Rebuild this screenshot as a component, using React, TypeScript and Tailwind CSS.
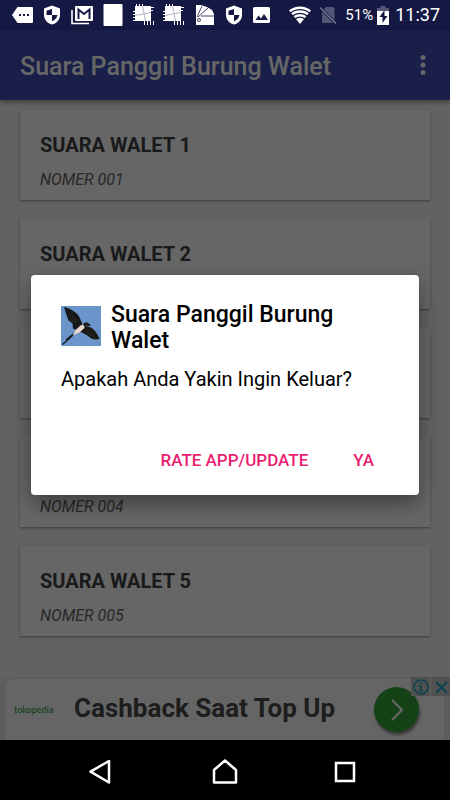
import React from "react";

const tracks = [1, 2, 3, 4, 5];

function ShieldIcon() {
  return (
    <svg className="h-5 w-[18px]" viewBox="0 0 18 20">
      <path d="M9 0.5 1 3.5V10c0 4.600 3.400 8.300 8 9.500 4.600-1.200 8-4.900 8-9.500V3.500Z" fill="#fff" />
      <path d="M9 4v6H3.500V5.800ZM9 10h5.500c-.5 3-2.500 5.200-5.500 6.300Z" fill="#151843" />
    </svg>
  );
}

function PatchIcon() {
  return (
    <svg className="h-[22px] w-[22px]" viewBox="0 0 22 22">
      <path d="M2 2h16v15H2Z" fill="#fff" />
      <path d="M0 7.500h2M0 10.500h2M0 13.500h2M0 16.500h2M3.500 0v2M6.500 0v2M9.500 0v2M11.500 17v4M14.500 17v4M17.500 17v4M20.500 17v4M18 3.500h3M18 6.500h2" stroke="#fff" strokeWidth="1" />
      <path d="m9.500 2 3 15M2 11.500 18 8.500" stroke="#a3a5bd" strokeWidth=".8" fill="none" />
    </svg>
  );
}

function StatusBar() {
  return (
    <header className="flex h-[30px] shrink-0 items-center bg-[#151843] pr-2.5 pl-3 text-white">
      <div className="flex flex-1 items-center gap-2.5">
        <svg className="h-4 w-[21px]" viewBox="0 0 21 16">
          <path d="M5.500 0H20q1 0 1 1v14q0 1-1 1H5.500L0 8Z" fill="#fff" />
          <path d="M7 7h2v2H7Zm4 0h2v2h-2Zm4 0h2v2h-2Z" fill="#151843" />
        </svg>
        <ShieldIcon />
        <svg className="h-[19px] w-[22px]" viewBox="0 0 22 19">
          <path d="M1 4v13.500h17" fill="none" stroke="#fff" strokeWidth="1.600" />
          <rect x="4" y="0" width="18" height="15" rx="1" fill="#fff" />
          <path d="M7.500 13V3.500L13 8l5.500-4.500V13" fill="none" stroke="#151843" strokeWidth="2" />
        </svg>
        <svg className="h-[22px] w-5" viewBox="0 0 20 22">
          <rect x=".5" width="19" height="22" rx="1" fill="#fff" />
        </svg>
        <div className="flex gap-2">
          <PatchIcon />
          <PatchIcon />
        </div>
        <svg className="h-5 w-5" viewBox="0 0 20 20">
          <path d="M1 0h5l6 2 5 3 2 4v11H1Z" fill="#fff" />
          <path d="M2 12 7 1M3 12 13 3M6 11h13" stroke="#151843" strokeWidth=".8" />
          <circle cx="4" cy="15" r="1.500" fill="none" stroke="#151843" strokeWidth=".8" />
        </svg>
        <ShieldIcon />
        <svg className="h-4 w-[17px]" viewBox="0 0 17 16">
          <rect width="17" height="16" rx="1.500" fill="#fff" />
          <path d="m2.500 13 3-4.500 2.500 3 3-4.500 4 6Z" fill="#151843" />
        </svg>
      </div>
      <div className="flex items-center gap-1">
        <svg className="h-[18px] w-[22px]" viewBox="0 0 22 18">
          <path d="M0 4.500C6-.8 16-.8 22 4.500L11 18Z" fill="#fff" />
          <path d="M1.500 7c5.500-4.500 13.500-4.500 19 0M3.500 10c4.500-3.500 10.500-3.500 15 0M6 13c3-2.200 7-2.200 10 0" fill="none" stroke="#151843" strokeWidth="1.200" />
        </svg>
        <svg className="ml-1 h-[18px] w-[18px]" viewBox="0 0 18 18">
          <path d="M7 1h7q1.500 0 1.500 1.500V17H3V5Z" fill="#545675" />
          <path d="m1 1.500 16 16" stroke="#151843" strokeWidth="3" />
          <path d="m1 1.500 16 16" stroke="#77799a" strokeWidth="1.400" />
        </svg>
        <span className="ml-1 text-[15px] leading-5">51%</span>
        <svg className="h-[19px] w-3" viewBox="0 0 12 19">
          <path d="M3.500 0h5v2H12v5H0V2h3.500Z" fill="#545675" />
          <path d="M0 5h12v14H0Z" fill="#fff" />
          <path d="M7.500 4 2.500 11h3v6l5-7h-3Z" fill="#151843" />
        </svg>
        <time className="ml-0.5 text-lg leading-6">11:37</time>
      </div>
    </header>
  );
}

function SwallowPicture() {
  return (
    <svg className="mt-1 h-10 w-10 shrink-0" viewBox="0 0 40 40" role="img" aria-label="Walet">
      <rect width="40" height="40" fill="#6b94cb" />
      <path d="M3 1c4 1 7 2 10 4.500 3 2 5 4 6 7l2.500 6-5 6-4.500-2-.5-5-4-3L5.500 9Z" fill="#15171a" />
      <path d="m22 20.500 7 .5c4 2 8 7 9.500 12-3 .8-6 .5-8-.5l-5-3.500-7.500-4Z" fill="#1b1914" />
      <path d="m8 7 8 9M24 24l10 7M10 13l4 4" stroke="#38362f" strokeWidth=".6" />
      <path d="m15 25-4 5L1.500 38.500M14 26.500 5 34" fill="none" stroke="#12161d" strokeWidth="1.200" />
      <path d="m19.500 19.500 4-1.500v4l-5 4.500-7 3 3-5.500Z" fill="#e6d6cc" />
      <path d="M22 18.500c1-3 5-2.500 6.500-.5l1.500 1-2 1-4 1.500Z" fill="#171923" />
      <circle cx="25.500" cy="19.500" r=".7" fill="#8a4a35" />
    </svg>
  );
}

function AdBanner() {
  return (
    <aside className="relative h-[63px] shrink-0 bg-[#e9e9e9] px-1.5 pt-0.5">
      <div className="flex h-full items-center rounded-tl-lg bg-[#fcfcfc] pr-[25px] pl-2">
        <span className="w-[60px] font-['Lato',sans-serif] text-[9px] text-[#149b36]">tokopedia</span>
        <a href="#ad" className="flex-1 pb-1 text-[26px] leading-8 font-bold whitespace-nowrap text-[#4a4a4a]">
          Cashback Saat Top Up
        </a>
        <button aria-label="Buka" className="flex h-[45px] w-[45px] items-center justify-center rounded-full bg-[#36a339] shadow-[1px_3px_3px_rgba(0,0,0,0.45)]">
          <svg className="h-6 w-4" viewBox="0 0 16 24">
            <path d="m3 2 10 10L3 22" fill="none" stroke="#fff" strokeWidth="2.200" />
          </svg>
        </button>
      </div>
      <div className="absolute top-0 right-0 flex gap-px">
        <button aria-label="Info iklan" className="flex h-[19px] w-[19px] items-center justify-center bg-[#c8c8c8]">
          <svg className="h-4 w-4" viewBox="0 0 16 16" fill="none" stroke="#16a5c5" strokeWidth="1.500">
            <circle cx="8" cy="8" r="7" />
            <path d="M8 3v2M6 7h2v5M6 12h4" />
          </svg>
        </button>
        <button aria-label="Tutup iklan" className="flex h-[19px] w-[19px] items-center justify-center bg-[#c8c8c8]">
          <svg className="h-4 w-4" viewBox="0 0 16 16" stroke="#16a5c5" strokeWidth="1.800">
            <path d="m3 3 11 11M14 3 3 14" />
          </svg>
        </button>
      </div>
    </aside>
  );
}

export default function App() {
  return (
    <div className="flex min-h-screen flex-col bg-black font-['Roboto',sans-serif]">
      <StatusBar />
      <div className="relative flex flex-1 flex-col bg-[#f5f5f5]">
        <div className="flex h-[70px] shrink-0 items-center justify-between bg-[#3f4fb5] pr-[17px] pl-5 text-white shadow-[0_2px_5px_rgba(0,0,0,0.4)]">
          <h1 className="pt-1 text-[25px] leading-8 font-medium">Suara Panggil Burung Walet</h1>
          <button aria-label="Menu" className="flex w-5 justify-center">
            <svg className="h-5 w-1.5" viewBox="0 0 6 20" fill="#fff">
              <circle cx="3" cy="2.500" r="2.500" />
              <circle cx="3" cy="10" r="2.500" />
              <circle cx="3" cy="17.500" r="2.500" />
            </svg>
          </button>
        </div>
        <ul className="flex flex-1 flex-col gap-[19px] px-5 pt-2.5">
          {tracks.map((n) => (
            <li key={n} className="h-[90px] bg-white px-5 pt-[21px] shadow-[0_1px_2px_rgba(0,0,0,0.4)]">
              <h2 className="text-xl leading-7 font-bold text-[#424242]">SUARA WALET {n}</h2>
              <p className="mt-[11px] text-base leading-5 text-[#666666] italic">NOMER 00{n}</p>
            </li>
          ))}
        </ul>
        <AdBanner />
        <div className="absolute inset-0 flex items-center justify-center bg-black/60 px-[31px]">
          <div role="dialog" aria-label="Suara Panggil Burung Walet" className="w-full rounded-sm bg-white px-[30px] pt-[27px] pb-[15px] shadow-[0_8px_20px_rgba(0,0,0,0.4)]">
            <div className="flex items-start gap-2.5">
              <SwallowPicture />
              <h2 className="flex-1 text-[23px] leading-[26px] font-medium text-black">Suara Panggil Burung Walet</h2>
            </div>
            <p className="mt-[11px] text-xl leading-7 text-black">Apakah Anda Yakin Ingin Keluar?</p>
            <div className="mt-[47px] flex justify-end gap-[15px] text-[17px] leading-6 font-medium text-[#e91e72]">
              <button className="px-[15px] py-2">RATE APP/UPDATE</button>
              <button className="px-[15px] py-2">YA</button>
            </div>
          </div>
        </div>
      </div>
      <nav className="flex h-[60px] shrink-0 items-center justify-center gap-[94px] bg-black pt-1">
        <button aria-label="Kembali">
          <svg className="h-[26px] w-[26px] overflow-visible" viewBox="0 0 26 26" fill="none" stroke="#fff" strokeWidth="2.500" strokeLinejoin="round">
            <path d="M17 2v21.500L-1.500 12.700Z" />
          </svg>
        </button>
        <button aria-label="Beranda">
          <svg className="h-[26px] w-[26px]" viewBox="0 0 26 26" fill="none" stroke="#fff" strokeWidth="2.500" strokeLinejoin="round">
            <path d="M2 23.500V11L13 1.500 24 11v12.500Z" />
          </svg>
        </button>
        <button aria-label="Aplikasi terbaru">
          <svg className="h-[26px] w-[26px]" viewBox="0 0 26 26" fill="none" stroke="#fff" strokeWidth="2.500">
            <rect x="4" y="4" width="18" height="18" />
          </svg>
        </button>
      </nav>
    </div>
  );
}
